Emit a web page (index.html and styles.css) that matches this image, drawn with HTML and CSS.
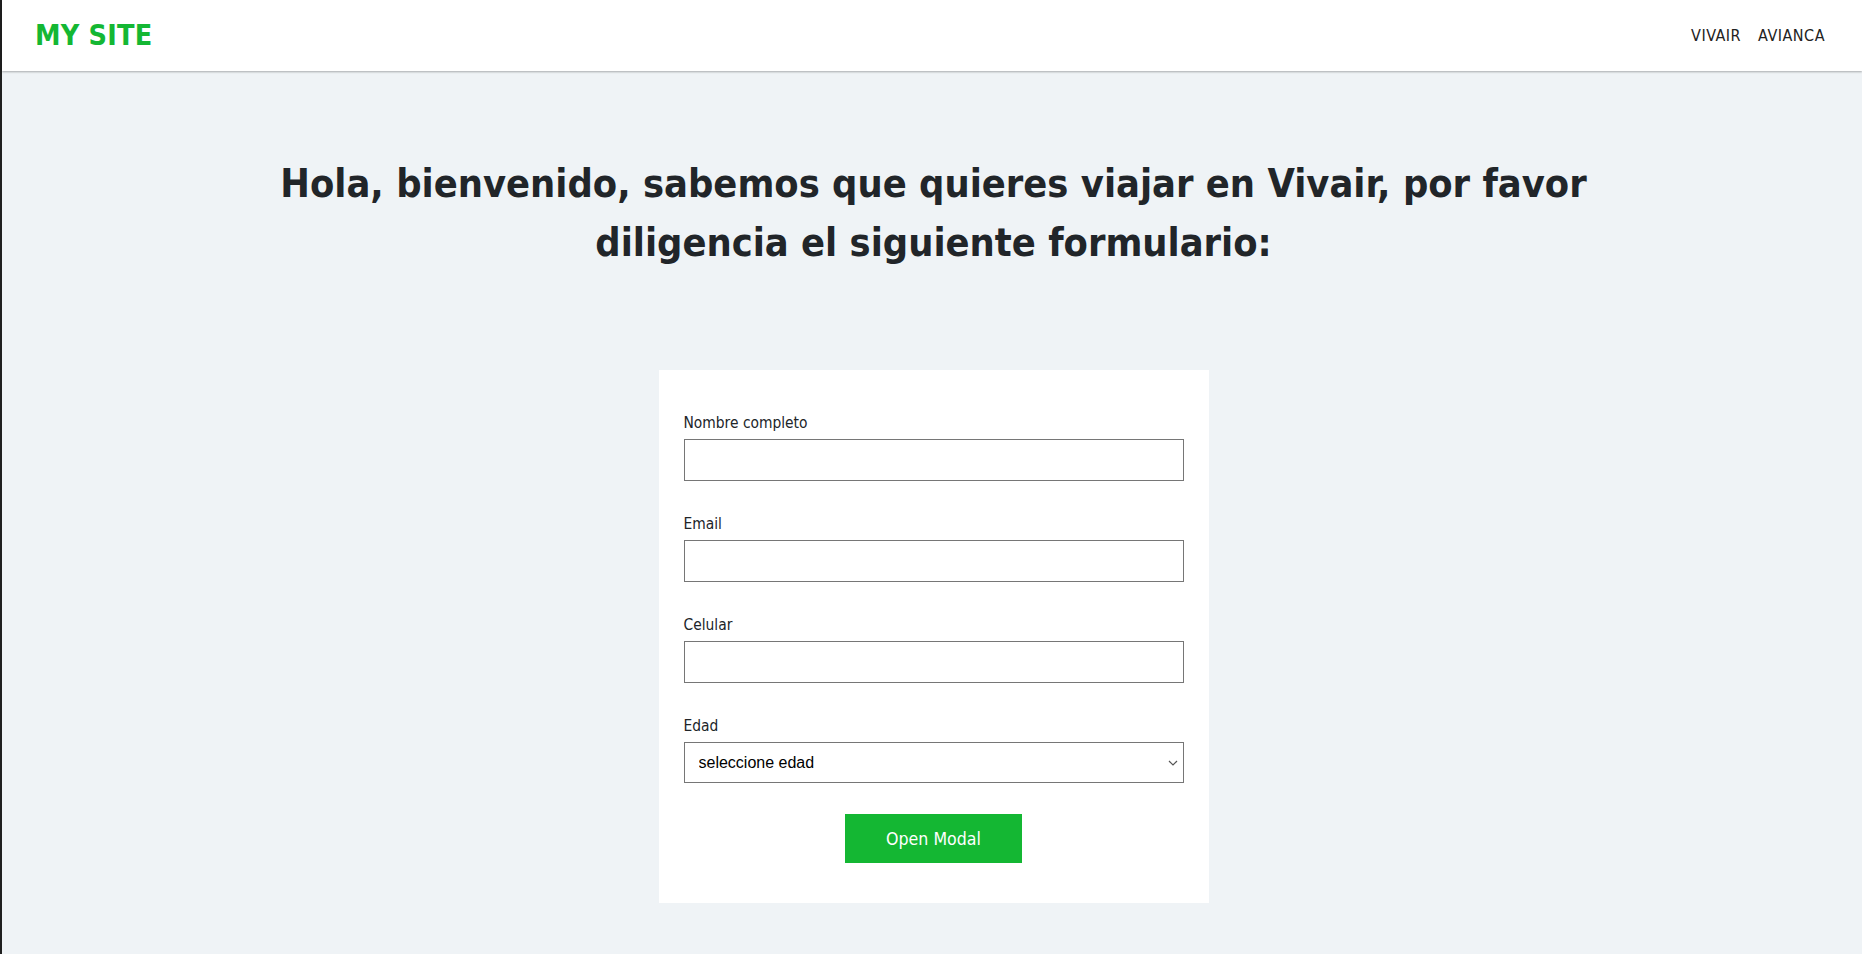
FILE: index.html
```html
<!DOCTYPE html>
<html lang="es">
<head>
<meta charset="utf-8">
<title>My Site</title>
<link rel="stylesheet" href="styles.css">
</head>
<body>
<div class="frame">
  <header class="navbar">
    <a class="brand" href="#">MY SITE</a>
    <nav class="nav-links">
      <a href="#">VIVAIR</a>
      <a href="#">AVIANCA</a>
    </nav>
  </header>
  <main class="content">
    <h1 class="title">Hola, bienvenido, sabemos que quieres viajar en Vivair, por favor diligencia el siguiente formulario:</h1>
    <form class="card">
      <div class="field">
        <label class="label" for="nombre">Nombre completo</label>
        <input class="input" id="nombre" type="text">
      </div>
      <div class="field">
        <label class="label" for="email">Email</label>
        <input class="input" id="email" type="email">
      </div>
      <div class="field">
        <label class="label" for="celular">Celular</label>
        <input class="input" id="celular" type="text">
      </div>
      <div class="field">
        <label class="label" for="edad">Edad</label>
        <div class="select-wrap">
          <select class="select" id="edad">
            <option>seleccione edad</option>
          </select>
          <svg class="chev" width="10" height="6" viewBox="0 0 10 6"><path d="M1 1l4 4 4-4" fill="none" stroke="#555" stroke-width="1.2"/></svg>
        </div>
      </div>
      <div class="actions">
        <button class="btn" type="button">Open Modal</button>
      </div>
    </form>
  </main>
</div>
</body>
</html>
```
FILE: styles.css
```css
* { box-sizing: border-box; }
html, body { margin: 0; padding: 0; }
body {
  font-family: "DejaVu Sans Condensed", "DejaVu Sans", sans-serif;
  color: #212529;
  background: #eff3f6;
}
.frame {
  min-height: 954px;
  border-left: 2px solid #1f1f1f;
  background: #eff3f6;
}
.navbar {
  height: 71px;
  background: #fff;
  display: flex;
  align-items: center;
  justify-content: space-between;
  padding: 0 37px 0 33px;
  box-shadow: 0 1px 2px rgba(0,0,0,0.3);
  position: relative;
}
.brand {
  color: #14b733;
  font-weight: bold;
  font-size: 28.5px;
  text-decoration: none;
  letter-spacing: 0.2px;
}
.nav-links { display: flex; gap: 17px; }
.nav-links a {
  color: #222;
  text-decoration: none;
  font-size: 16px;
  letter-spacing: 0.5px;
}
.content {
  display: flex;
  flex-direction: column;
  align-items: center;
  padding-top: 83px;
  padding-left: 3px;
}
.title {
  margin: 0;
  max-width: 1330px;
  text-align: center;
  font-size: 39.4px;
  line-height: 59px;
  font-weight: bold;
  color: #212529;
}
.card {
  margin-top: 98px;
  width: 550px;
  background: #fff;
  padding: 44px 25px 40px;
  display: flex;
  flex-direction: column;
}
.field { display: flex; flex-direction: column; gap: 7px; }
.field + .field { margin-top: 34px; }
.label { font-size: 15.4px; line-height: 18px; color: #212529; }
.input {
  width: 500px;
  height: 42px;
  border: 1px solid #767676;
  background: #fff;
  margin: 0;
  padding: 0 10px;
  font-size: 15px;
}
.select-wrap { position: relative; width: 500px; }
.select {
  width: 500px;
  height: 41px;
  border: 1px solid #767676;
  background: #fff;
  -webkit-appearance: none;
  appearance: none;
  padding: 0 14px;
  font-family: "Liberation Sans", Arial, sans-serif;
  font-size: 16px;
  color: #000;
  margin: 0;
  border-radius: 0;
}
.chev { position: absolute; right: 6px; top: 18px; pointer-events: none; }
.actions { display: flex; justify-content: center; margin-top: 31px; }
.btn {
  width: 177px;
  height: 49px;
  background: #14b733;
  border: none;
  color: #fff;
  font-family: "DejaVu Sans Condensed", "DejaVu Sans", sans-serif;
  font-size: 17.6px;
  cursor: pointer;
}
```
